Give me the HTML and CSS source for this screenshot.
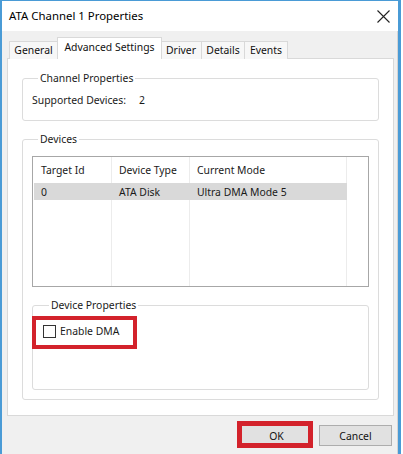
FILE: index.html
```html
<!DOCTYPE html>
<html>
<head>
<meta charset="utf-8">
<link rel="stylesheet" href="styles.css">
</head>
<body>
<div class="window">
  <div class="titlebar">
    <span class="title">ATA Channel 1 Properties</span>
    <svg class="close" width="13" height="13" viewBox="0 0 13 13"><path d="M0.5 0.5 L12.5 12.5 M12.5 0.5 L0.5 12.5" stroke="#222" stroke-width="1.1" fill="none"/></svg>
  </div>
  <div class="client">
    <div class="tabs">
      <div class="tab w-general">General</div>
      <div class="tab tab-active w-adv">Advanced Settings</div>
      <div class="tab w-driver">Driver</div>
      <div class="tab w-details">Details</div>
      <div class="tab w-events">Events</div>
    </div>
    <div class="panel">
      <fieldset class="group group-channel">
        <legend>Channel Properties</legend>
        <div class="supported"><span>Supported Devices:</span><span class="num">2</span></div>
      </fieldset>
      <fieldset class="group group-devices">
        <legend>Devices</legend>
        <div class="list">
          <div class="gridlines">
            <div class="col c1"></div>
            <div class="col c2"></div>
            <div class="col c3"></div>
          </div>
          <div class="row header">
            <div class="cell c1">Target Id</div>
            <div class="cell c2">Device Type</div>
            <div class="cell c3">Current Mode</div>
          </div>
          <div class="row selected">
            <div class="cell c1">0</div>
            <div class="cell c2">ATA Disk</div>
            <div class="cell c3">Ultra DMA Mode 5</div>
          </div>
        </div>
        <fieldset class="group group-props">
          <legend>Device Properties</legend>
          <label class="check">
            <span class="box"></span>
            <span>Enable DMA</span>
          </label>
          <div class="mark mark-dma"></div>
        </fieldset>
      </fieldset>
    </div>
    <div class="footer">
      <div class="btn-wrap">
        <button class="btn">OK</button>
        <div class="mark mark-ok"></div>
      </div>
      <button class="btn">Cancel</button>
    </div>
  </div>
</div>
</body>
</html>
```

FILE: styles.css
```css
html, body {
  margin: 0;
  padding: 0;
  background: #ffffff;
}
body {
  font-family: "Noto Sans", "Open Sans", sans-serif;
  font-size: 10.4px;
  color: #1a1a1a;
}
.window {
  width: 396px;
  height: 453px;
  border-top: 1px solid #4a9bd6;
  border-left: 2px solid #4a9bd6;
  border-right: 3px solid #4a9bd6;
  background: #f0f0f0;
  display: flex;
  flex-direction: column;
}
.titlebar {
  height: 30px;
  background: #ffffff;
  display: flex;
  align-items: center;
  justify-content: space-between;
  padding: 0 8px 0 7px;
}
.title {
  font-size: 11.4px;
  color: #000;
  margin-top: -1px;
}
.close {
  margin-top: 1px;
}
.client {
  flex: 1;
  display: flex;
  flex-direction: column;
  border-right: 1px solid #d4d4d4;
}
.tabs {
  display: flex;
  align-items: flex-end;
  padding: 6px 0 0 7px;
  height: 22px;
  position: relative;
  z-index: 2;
  margin-bottom: -1px;
}
.tab {
  box-sizing: border-box;
  height: 18px;
  border: 1px solid #d9d9d9;
  border-bottom: none;
  background: #f7f7f7;
  margin-left: -1px;
  display: flex;
  align-items: center;
  justify-content: center;
  color: #111;
  padding-bottom: 1px;
}
.tab-active {
  height: 22px;
  background: #ffffff;
  padding-bottom: 4px;
  margin-left: -1px;
  margin-right: -1px;
  position: relative;
}
.w-general { width: 49px; margin-left: 0; }
.w-adv { width: 105px; }
.w-driver { width: 42px; }
.w-details { width: 44px; }
.w-events { width: 44px; }
.panel {
  margin: 0 3px 0 5px;
  height: 358px;
  background: #ffffff;
  border: 1px solid #d9d9d9;
  box-sizing: border-box;
  padding: 12px 14px 0 14px;
}
.group {
  margin: 0;
  border: 1px solid #dcdcdc;
  border-radius: 3px;
  padding: 0;
  min-width: 0;
}
.group legend {
  padding: 0 2px;
  margin-left: 6px;
  line-height: 14px;
  color: #1a1a1a;
}
.group-channel {
  padding: 8px 9px 13px 9px;
  height: 50px;
  box-sizing: border-box;
}
.supported {
  line-height: 14px;
  display: flex;
}
.supported .num {
  margin-left: 13px;
}
.group-devices {
  margin-top: 11px;
  padding: 10px 9px 9px 9px;
}
.list {
  height: 131px;
  box-sizing: border-box;
  border: 1px solid #a7a7a7;
  position: relative;
  padding: 0 1px;
}
.gridlines {
  position: absolute;
  top: 0;
  bottom: 0;
  left: 1px;
  display: flex;
}
.col {
  box-sizing: border-box;
  border-right: 1px solid #ececec;
}
.row {
  display: flex;
  position: relative;
}
.cell {
  box-sizing: border-box;
  padding-left: 7px;
}
.c1 { width: 78px; }
.c2 { width: 78px; }
.c3 { width: 157px; }
.header {
  height: 26px;
  align-items: center;
}
.selected {
  height: 17px;
  align-items: center;
  background: #d9d9d9;
  width: 313px;
}
.group-props {
  margin-top: 11px;
  height: 92px;
  box-sizing: border-box;
  padding: 12px 10px 0 10px;
  position: relative;
}
.check {
  display: flex;
  align-items: center;
  gap: 4px;
  line-height: 14px;
}
.box {
  width: 11px;
  height: 11px;
  border: 1px solid #333;
  background: #fff;
}
.mark {
  position: absolute;
  border: 4px solid #d3222b;
  box-sizing: border-box;
  pointer-events: none;
}
.mark-dma {
  left: -1px;
  top: 4px;
  width: 105px;
  height: 33px;
}
.footer {
  display: flex;
  justify-content: flex-end;
  align-items: center;
  gap: 6px;
  padding: 9px 5px 0 0;
}
.btn-wrap {
  position: relative;
}
.btn {
  font-family: "Noto Sans", "Open Sans", sans-serif;
  font-size: 10.4px;
  color: #111;
  width: 73px;
  height: 21px;
  background: #e1e1e1;
  border: 1px solid #adadad;
  padding: 0;
  margin: 0;
  display: block;
}
.mark-ok {
  left: -3px;
  top: -4px;
  width: 76px;
  height: 27px;
  border-width: 5px;
}
```
